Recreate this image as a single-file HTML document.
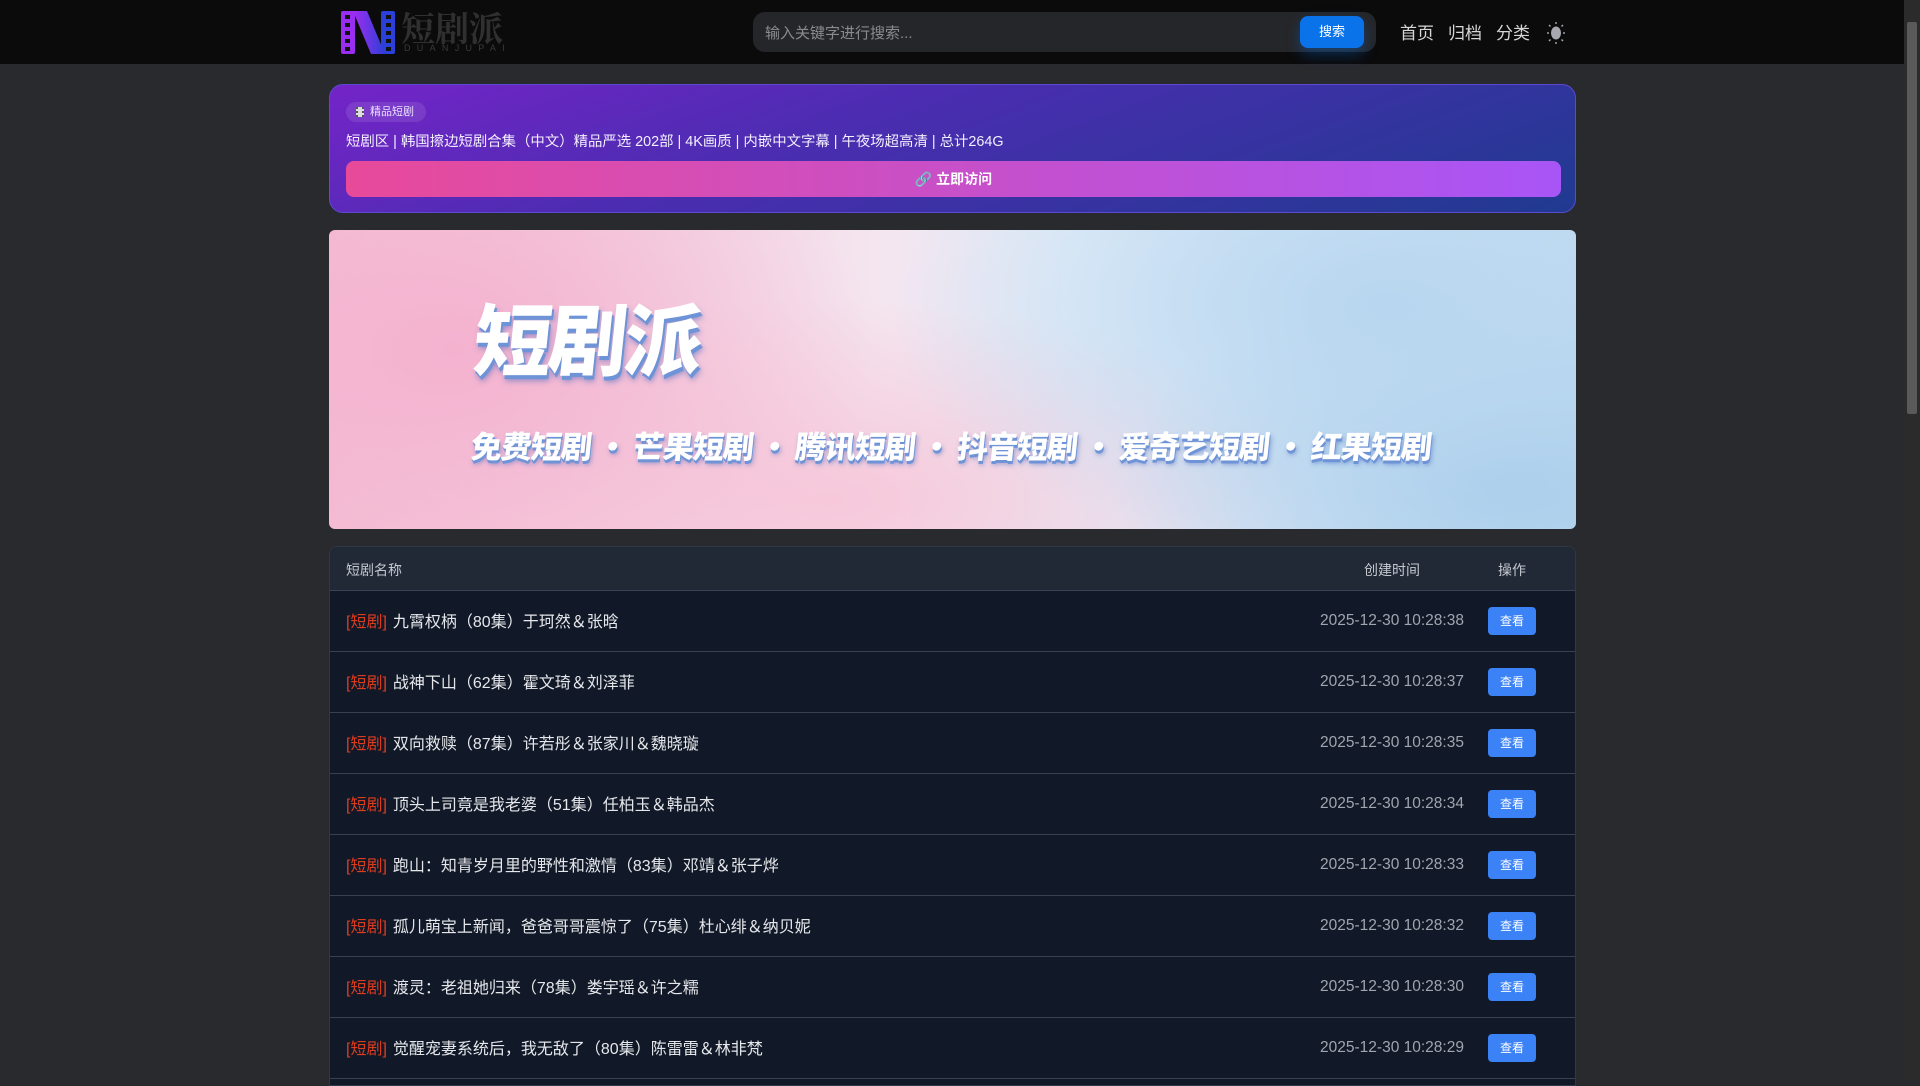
<!DOCTYPE html>
<html><head><meta charset="utf-8"><style>
*{margin:0;padding:0;box-sizing:border-box}
body{width:1920px;height:1080px;overflow:hidden;background:#292a2e;font-family:"Liberation Sans","Noto Sans CJK SC",sans-serif;color:#e5e7eb;position:relative}
.hdr{position:absolute;left:0;top:0;width:1904px;height:64px;background:#0b0b0c}
.sb{position:absolute;right:0;top:0;width:16px;height:1080px;background:#2b2b2b}
.sb i{position:absolute;left:3px;top:22px;width:10px;height:392px;background:#5a5a5a;border-radius:2px}
.srch{position:absolute;left:753px;top:12px;width:623px;height:40px;background:#252629;border-radius:12px}
.srch span{position:absolute;left:12px;top:10px;font-size:15px;color:#8a8b90}
.btn{position:absolute;left:1300px;top:16px;width:64px;height:32px;background:#0a73ea;border-radius:8px;color:#fff;font-size:13px;text-align:center;line-height:32px;box-shadow:0 6px 14px rgba(10,115,234,.35)}
.nav{position:absolute;top:19px;font-size:17px;color:#d7d7d7}
.card{position:absolute;left:329px;top:84px;width:1247px;height:129px;border-radius:14px;border:1px solid #5b4ad0;background:linear-gradient(160deg,#7424c8 0%,#4a2db0 40%,#203a90 100%)}
.badge{position:absolute;left:16px;top:17px;width:80px;height:20px;border-radius:10px;background:rgba(255,255,255,.1);font-size:11px;color:#e8e0ff;line-height:20px;padding-left:24px}
.badge b{position:absolute;left:10px;top:5px;width:8px;height:10px;background:#ddd;border-left:2px dotted #555;border-right:2px dotted #555}
.line{position:absolute;left:16px;top:45px;font-size:14.4px;color:#f3efff;white-space:nowrap}
.go{position:absolute;left:16px;top:76px;width:1215px;height:36px;border-radius:8px;background:linear-gradient(90deg,#e84a9a,#a855f7);color:#fff;font-weight:bold;font-size:14px;text-align:center;line-height:36px}
.ban{position:absolute;left:329px;top:230px;width:1247px;height:299px;border-radius:6px;overflow:hidden;background:
radial-gradient(ellipse 420px 300px at 10% 40%,#f4b2cf 0%,rgba(244,178,207,0) 100%),
radial-gradient(ellipse 500px 260px at 85% 25%,#b8d6f0 0%,rgba(184,214,240,0) 100%),
radial-gradient(ellipse 400px 200px at 95% 85%,#a9cdea 0%,rgba(169,205,234,0) 100%),
radial-gradient(ellipse 500px 200px at 40% 90%,#f6c8da 0%,rgba(246,200,218,0) 100%),
linear-gradient(90deg,#f5c0d6,#f4e6f0 45%,#e4eef8 60%,#c5def3)}
.t1{position:absolute;left:140px;top:50px;font-size:78px;font-weight:900;color:#fff;text-shadow:2px 4px 0 #6e93d6,3px 6px 6px rgba(60,100,190,.5);letter-spacing:-3px;font-family:"Noto Sans CJK SC",sans-serif;transform:skewX(-6deg);transform-origin:left bottom}
.t2{position:absolute;left:140px;top:192px;font-size:31px;font-weight:900;color:#fff;text-shadow:1px 3px 0 #6e93d6,2px 4px 5px rgba(60,100,190,.5);white-space:nowrap;letter-spacing:-1px;font-family:"Noto Sans CJK SC",sans-serif;transform:skewX(-6deg);transform-origin:left bottom}
.t2 s{text-decoration:none;margin:0 6px}
.tbl{position:absolute;left:329px;top:546px;width:1247px;height:540px;border:1px solid #2f3846;border-radius:8px 8px 0 0;overflow:hidden;background:#111827}
.th{height:44px;background:#212936;border-bottom:1px solid #3a4456;position:relative;font-size:14px;color:#c4c8cf}
.tr{height:61px;border-bottom:1px solid #374151;position:relative}
.c1{position:absolute;left:16px}
.th .c1,.th .c2,.th .c3{top:13px}
.c2{position:absolute;left:982px;width:160px;text-align:center}
.c3{position:absolute;left:1152px;width:60px;text-align:center}
.tr .c1{top:17px;font-size:16px;color:#e5e7eb}
.tr .c1 em{font-style:normal;color:#dc3d1f;margin-right:6px}
.tr .c2{top:21px;font-size:15.5px;color:#a0a6b0;font-family:"Liberation Sans",sans-serif}
.tr .c3{left:1158px;top:16px;width:48px;height:28px;background:#3b82f6;border-radius:4px;color:#fff;font-size:12px;line-height:28px}
</style></head><body>
<div class="hdr">
<svg style="position:absolute;left:341px;top:11px" width="54" height="43" viewBox="0 0 54 43">
<defs><linearGradient id="g" x1="0" x2="1"><stop offset="0" stop-color="#a22cf0"/><stop offset="1" stop-color="#2c3fd8"/></linearGradient></defs>
<rect x="0" y="0" width="14" height="43" rx="2" fill="#9a2ef0"/>
<rect x="40" y="0" width="14" height="43" rx="2" fill="#2a40d8"/>
<path d="M12 0 L26 0 L44 43 L30 43 Z" fill="url(#g)"/>
<g fill="#111"><rect x="4" y="4" width="5" height="4"/><rect x="4" y="12" width="5" height="4"/><rect x="4" y="20" width="5" height="4"/><rect x="4" y="28" width="5" height="4"/><rect x="4" y="36" width="5" height="4"/>
<rect x="45" y="4" width="5" height="4"/><rect x="45" y="12" width="5" height="4"/><rect x="45" y="20" width="5" height="4"/><rect x="45" y="28" width="5" height="4"/><rect x="45" y="36" width="5" height="4"/></g></svg>
<div style="position:absolute;left:401px;top:8px;font-size:34px;font-family:'Noto Serif CJK SC',serif;font-weight:bold;color:#303030;line-height:38px">短剧派</div>
<div style="position:absolute;left:404px;top:43px;font-size:9px;letter-spacing:6.3px;color:#3a3a3a">DUANJUPAI</div>
<div class="srch"><span>输入关键字进行搜索...</span></div>
<div class="btn">搜索</div>
<div class="nav" style="left:1400px">首页</div>
<div class="nav" style="left:1448px">归档</div>
<div class="nav" style="left:1496px">分类</div>
<svg style="position:absolute;left:1546px;top:22px" width="20" height="22" viewBox="0 0 20 22"><ellipse cx="10" cy="11" rx="5" ry="6.5" fill="#a8a8b0"/><g stroke="#a8a8b0" stroke-width="1.4"><line x1="10" y1="0" x2="10" y2="2"/><line x1="10" y1="20" x2="10" y2="22"/><line x1="1" y1="11" x2="3" y2="11"/><line x1="17" y1="11" x2="19" y2="11"/><line x1="3" y1="3" x2="4.5" y2="4.5"/><line x1="15.5" y1="17.5" x2="17" y2="19"/><line x1="17" y1="3" x2="15.5" y2="4.5"/><line x1="3" y1="19" x2="4.5" y2="17.5"/></g></svg>
</div>
<div class="sb"><i></i></div>
<div class="card">
<div class="badge"><b></b>精品短剧</div>
<div class="line">短剧区 | 韩国擦边短剧合集（中文）精品严选 202部 | 4K画质 | 内嵌中文字幕 | 午夜场超高清 | 总计264G</div>
<div class="go">🔗 立即访问</div>
</div>
<div class="ban">
<div class="t1">短剧派</div>
<div class="t2">免费短剧<s>·</s>芒果短剧<s>·</s>腾讯短剧<s>·</s>抖音短剧<s>·</s>爱奇艺短剧<s>·</s>红果短剧</div>
</div>
<div class="tbl">
<div class="th"><span class="c1">短剧名称</span><span class="c2">创建时间</span><span class="c3">操作</span></div>
<div class="tr"><span class="c1"><em>[短剧]</em>九霄权柄（80集）于珂然＆张晗</span><span class="c2">2025-12-30 10:28:38</span><span class="c3">查看</span></div>
<div class="tr"><span class="c1"><em>[短剧]</em>战神下山（62集）霍文琦＆刘泽菲</span><span class="c2">2025-12-30 10:28:37</span><span class="c3">查看</span></div>
<div class="tr"><span class="c1"><em>[短剧]</em>双向救赎（87集）许若彤＆张家川＆魏晓璇</span><span class="c2">2025-12-30 10:28:35</span><span class="c3">查看</span></div>
<div class="tr"><span class="c1"><em>[短剧]</em>顶头上司竟是我老婆（51集）任柏玉＆韩品杰</span><span class="c2">2025-12-30 10:28:34</span><span class="c3">查看</span></div>
<div class="tr"><span class="c1"><em>[短剧]</em>跑山：知青岁月里的野性和激情（83集）邓靖＆张子烨</span><span class="c2">2025-12-30 10:28:33</span><span class="c3">查看</span></div>
<div class="tr"><span class="c1"><em>[短剧]</em>孤儿萌宝上新闻，爸爸哥哥震惊了（75集）杜心绯＆纳贝妮</span><span class="c2">2025-12-30 10:28:32</span><span class="c3">查看</span></div>
<div class="tr"><span class="c1"><em>[短剧]</em>渡灵：老祖她归来（78集）娄宇瑶＆许之糯</span><span class="c2">2025-12-30 10:28:30</span><span class="c3">查看</span></div>
<div class="tr"><span class="c1"><em>[短剧]</em>觉醒宠妻系统后，我无敌了（80集）陈雷雷＆林非梵</span><span class="c2">2025-12-30 10:28:29</span><span class="c3">查看</span></div>
</div>
</body></html>
